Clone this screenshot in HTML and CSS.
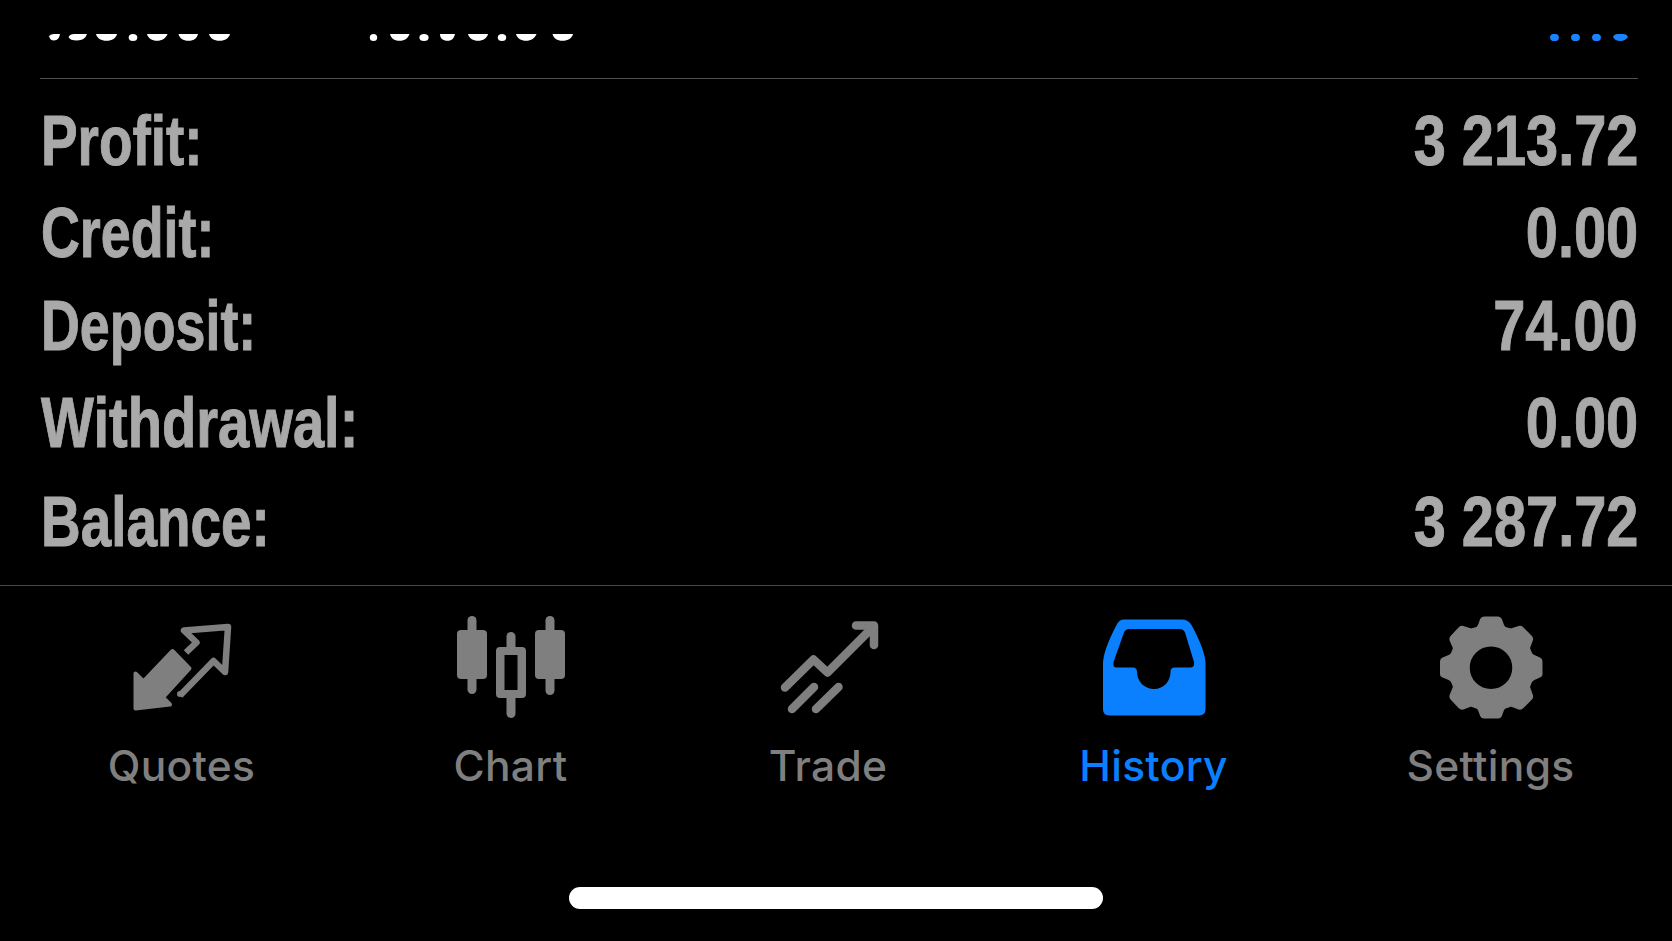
FILE: index.html
```html
<!doctype html>
<html lang="en">
<head>
    <meta charset="utf-8">
    <meta name="viewport" content="width=device-width, initial-scale=1.0">
    <title>History</title>
    <link rel="stylesheet" href="styles.css">
</head>
<body>
    <!-- last deal, scrolled out under the top edge -->
    <div class="deal">
        <svg class="deal-clip" viewBox="0 0 1592 7">
            <g fill="#fff">
                <path d="M1 2Q3 0 6 0H12Q11 6.500 6 6.500Q2 6.500 1 2Z"/>
                <path d="M20.500 3Q22 0 26 0H39Q37 6.500 29 6.500Q22 6.500 20.500 3Z"/>
                <path d="M48 0H69C68 4 64 6.800 58.500 6.800S49 4 48 0Z"/>
                <ellipse cx="85" cy="3.500" rx="4.300" ry="3.500"/>
                <path d="M99 0H119.500C118 4 114 6.800 109 6.800S100 4 99 0Z"/>
                <path d="M130.500 0H150C149 4 146 6.800 140.500 6.800S131.500 4 130.500 0Z"/>
                <path d="M161 0H182C181 4 177 6.800 171.500 6.800S162 4 161 0Z"/>
                <ellipse cx="325.500" cy="3.500" rx="3.700" ry="3.500"/>
                <path d="M342 0H361.500C360 4 357 6.800 351.500 6.800S343 4 342 0Z"/>
                <ellipse cx="376" cy="3.500" rx="4.600" ry="3.500"/>
                <path d="M392 0H407C406 4 404 6.800 399.500 6.800S392 4.500 392 0Z"/>
                <path d="M420 0H440C439 4 435 6.800 430 6.800S421 4 420 0Z"/>
                <ellipse cx="454" cy="3.500" rx="4.200" ry="3.500"/>
                <path d="M468 0H488.500C487 4 483 6.800 478 6.800S469 4 468 0Z"/>
                <path d="M504.500 0H525C524 4 520 6.800 514.500 6.800S505.500 4 504.500 0Z"/>
            </g>
            <g fill="#1a84ff">
                <ellipse cx="1506.500" cy="3.500" rx="4.500" ry="3.700"/>
                <ellipse cx="1527.500" cy="3.500" rx="4.500" ry="3.700"/>
                <ellipse cx="1548.500" cy="3.500" rx="4.500" ry="3.700"/>
                <path d="M1565 3Q1566 0 1570 0H1575Q1579 0 1580 3Q1577 7 1572.500 7Q1567 7 1565 3Z"/>
            </g>
        </svg>
    </div>

    <div class="summary">
        <div class="row profit"><span class="name">Profit:</span><span class="value">3 213.72</span></div>
        <div class="row credit"><span class="name">Credit:</span><span class="value">0.00</span></div>
        <div class="row deposit"><span class="name">Deposit:</span><span class="value">74.00</span></div>
        <div class="row withdrawal"><span class="name">Withdrawal:</span><span class="value">0.00</span></div>
        <div class="row balance"><span class="name">Balance:</span><span class="value">3 287.72</span></div>
    </div>

    <div class="tabbar">
        <div class="tab">
            <svg class="icon" viewBox="0 0 120 110">
                <path fill="currentColor" stroke="currentColor" stroke-width="4" stroke-linejoin="round" d="M50.500 41L67.500 58.500L41 87.500L48 94.500L13.500 98.500V63.500L21.500 71.500Z"/>
                <path fill="none" stroke="currentColor" stroke-width="6.500" stroke-linejoin="round" d="M64 42.500L74.500 32.500L62 20.500L106 17L103 62L91.500 51L58 85.500"/>
                <circle cx="58" cy="84" r="3" fill="currentColor"/>
            </svg>
            <span class="label">Quotes</span>
        </div>
        <div class="tab">
            <svg class="icon" viewBox="0 0 120 110">
                <g fill="currentColor">
                    <rect x="16.500" y="6" width="9" height="78" rx="4.500"/>
                    <rect x="6" y="20" width="30" height="49" rx="4"/>
                    <rect x="94.500" y="6" width="9" height="79" rx="4.500"/>
                    <rect x="84" y="20" width="30" height="49" rx="4"/>
                    <rect x="55.500" y="22" width="9" height="20" rx="4.500"/>
                    <rect x="55.500" y="82" width="9" height="26" rx="4.500"/>
                    <path fill-rule="evenodd" d="M49 37H71Q75 37 75 41V84Q75 88 71 88H49Q45 88 45 84V41Q45 37 49 37ZM53.500 45V80H66.500V45Z"/>
                </g>
            </svg>
            <span class="label">Chart</span>
        </div>
        <div class="tab">
            <svg class="icon" viewBox="0 0 120 110">
                <g fill="none" stroke="currentColor" stroke-width="8.500" stroke-linecap="round" stroke-linejoin="round">
                    <path d="M17 77.500L45.500 49.500L59.500 62.500L104 18"/>
                    <path d="M88 15.500H106V35"/>
                    <path d="M24 99L46 77M48 99L70.500 77"/>
                </g>
            </svg>
            <span class="label">Trade</span>
        </div>
        <div class="tab active">
            <svg class="icon" viewBox="0 0 120 110">
                <path fill="currentColor" fill-rule="evenodd" d="M29 9.500H88Q94 9.500 97.500 15Q111.500 41 111.500 54V99Q111.500 105.500 105 105.500H15.500Q9 105.500 9 99V54Q9 41 22 16Q25 9.500 29 9.500ZM35 19Q31.500 19 30 22.500L19.500 52Q18.500 57.500 22.500 57.500H39Q43 57.500 43 62C43 71 50 79 60 79S76.500 71 76.500 62Q76.500 57.500 80.500 57.500H96Q101 57.500 100 52L91 22.500Q89.500 19 86 19Z"/>
            </svg>
            <span class="label">History</span>
        </div>
        <div class="tab">
            <svg class="icon" viewBox="0 0 120 110">
                <path fill="currentColor" fill-rule="evenodd" stroke="currentColor" stroke-width="2" stroke-linejoin="round" d="M53 7.500H67Q69 7.500 70 9.500L72 15Q73 18 76 18.500L80 19.500L88 17Q90 16.500 91.500 18L100 26.500Q101.500 28 101 30L98 38L99.500 42Q100.500 45 103 46L108.500 48.500Q110.500 49.500 110.500 51.500V64Q110.500 66 108.500 66.500L103 69Q100.500 70 99.500 73L98 77L101 85.500Q101.500 87.500 100 89L91.500 97.500Q90 99 88 98.500L80 95.500L76 97Q73 97.500 72 100L70 105.500Q69 107.500 67 107.500H53Q51 107.500 50 105.500L48 100Q47 97.500 44 97L40 95.500L32 98.500Q30 99 28.500 97.500L20.500 89Q19 87.500 19.500 85.500L23 77L21.500 73Q20.500 70 18 69L12 66.500Q10 66 10 64V51.500Q10 49.500 12 48.500L18 46Q20.500 45 21.500 42L23 38L19.500 30Q19 28 20.500 26.500L28.500 18Q30 16.500 32 17L40 19.500L44 18.500Q47 18 48 15L50 9.500Q51 7.500 53 7.500ZM60 35.500A22.200 22.200 0 1 0 60 80A22.200 22.200 0 1 0 60 35.500Z"/>
            </svg>
            <span class="label">Settings</span>
        </div>
    </div>

    <div class="home-indicator"></div>
</body>
</html>
```

FILE: styles.css
```css
html {
    padding: 0;
    margin: 0;
}
body {
    margin: 0;
    width: 1672px;
    height: 941px;
    overflow: hidden;
    background: #000;
    color: #a9a9a9;
    font-family: Inter, sans-serif;
}

.deal {
    box-sizing: border-box;
    height: 79px;
    margin: 0 34px 0 40px;
    padding-top: 34px;
    border-bottom: solid 1px #505050;
}
.deal-clip {
    display: block;
    width: 1592px;
    height: 7px;
    margin-left: 8px;
}

.summary {
    box-sizing: border-box;
    height: 506px;
    padding: 16px 34px 0 41px;
    font-family: "Liberation Sans", Arial, sans-serif;
    font-size: 71px;
    font-weight: bold;
    line-height: 92px;
    -webkit-text-stroke: 1px #a9a9a9;
}
.row {
    display: flex;
    justify-content: space-between;
    height: 92px;
    white-space: pre;
}
.row.credit {
    height: 93px;
}
.row.deposit {
    height: 97px;
}
.row.withdrawal {
    height: 99px;
}
.name {
    transform: scaleX(.773);
    transform-origin: left;
}
.credit .name,
.deposit .name {
    transform: scaleX(.758);
}
.withdrawal .name {
    transform: scaleX(.79);
}
.value {
    transform: scaleX(.813);
    transform-origin: right;
}

.tabbar {
    display: grid;
    grid-template-columns: 327px 331px 304px 347px 327px;
    box-sizing: border-box;
    height: 302px;
    padding: 24px 18px 0;
    border-top: solid 1px #484848;
    color: #7f7f7f;
}
.tab {
    display: flex;
    flex-direction: column;
    align-items: center;
}
.tab.active {
    color: #0a80ff;
}
.icon {
    width: 120px;
    height: 110px;
}
.label {
    margin-top: 20px;
    font-size: 42.5px;
    font-weight: 450;
    line-height: 52px;
    letter-spacing: .3px;
}

.home-indicator {
    width: 534px;
    height: 22px;
    margin-left: 569px;
    border-radius: 11px;
    background: #fff;
}
```
